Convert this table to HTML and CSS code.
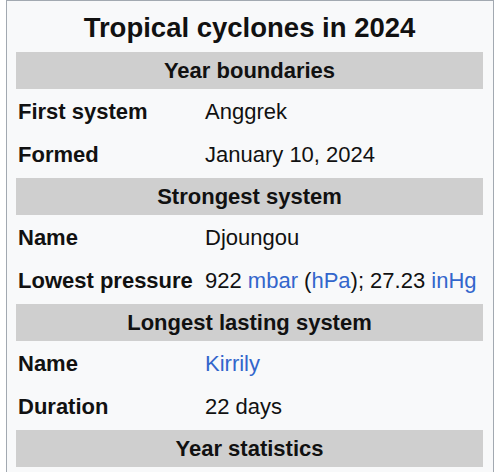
FILE: index.html
```html
<!DOCTYPE html>
<html>
<head>
<meta charset="utf-8">
<link rel="stylesheet" href="styles.css">
</head>
<body>
<div class="infobox">
  <div class="title">Tropical cyclones in 2024</div>
  <div class="header">Year boundaries</div>
  <div class="row"><div class="label">First system</div><div class="value">Anggrek</div></div>
  <div class="row"><div class="label">Formed</div><div class="value">January 10, 2024</div></div>
  <div class="header">Strongest system</div>
  <div class="row"><div class="label">Name</div><div class="value">Djoungou</div></div>
  <div class="row"><div class="label">Lowest pressure</div><div class="value">922 <a href="#">mbar</a> (<a href="#">hPa</a>); 27.23 <a href="#">inHg</a></div></div>
  <div class="header">Longest lasting system</div>
  <div class="row"><div class="label">Name</div><div class="value"><a href="#">Kirrily</a></div></div>
  <div class="row"><div class="label">Duration</div><div class="value">22 days</div></div>
  <div class="header">Year statistics</div>
</div>
</body>
</html>
```
FILE: styles.css
```css
html, body {
  margin: 0;
  padding: 0;
  background: #ffffff;
}
body {
  font-family: "Liberation Sans", Arial, Helvetica, sans-serif;
  font-size: 22px;
  color: #111111;
}
.infobox {
  margin-left: 6px;
  box-sizing: border-box;
  width: 488px;
  border: 1px solid #a2a9b1;
  background: #f8f9fa;
  padding: 0 10px 20px 9px;
  display: flex;
  flex-direction: column;
  gap: 3px;
}
.title {
  font-size: 27.5px;
  font-weight: bold;
  text-align: center;
  line-height: 33px;
  padding: 10px 0 5px;
}
.header {
  background: #cfcfcf;
  font-weight: bold;
  text-align: center;
  height: 37px;
  line-height: 37px;
}
.row {
  display: flex;
  height: 40px;
  line-height: 40px;
}
.label {
  font-weight: bold;
  width: 187px;
  padding-left: 2px;
  flex: none;
  white-space: nowrap;
}
.value {
  white-space: nowrap;
}
a {
  color: #3366cc;
  text-decoration: none;
}
```
